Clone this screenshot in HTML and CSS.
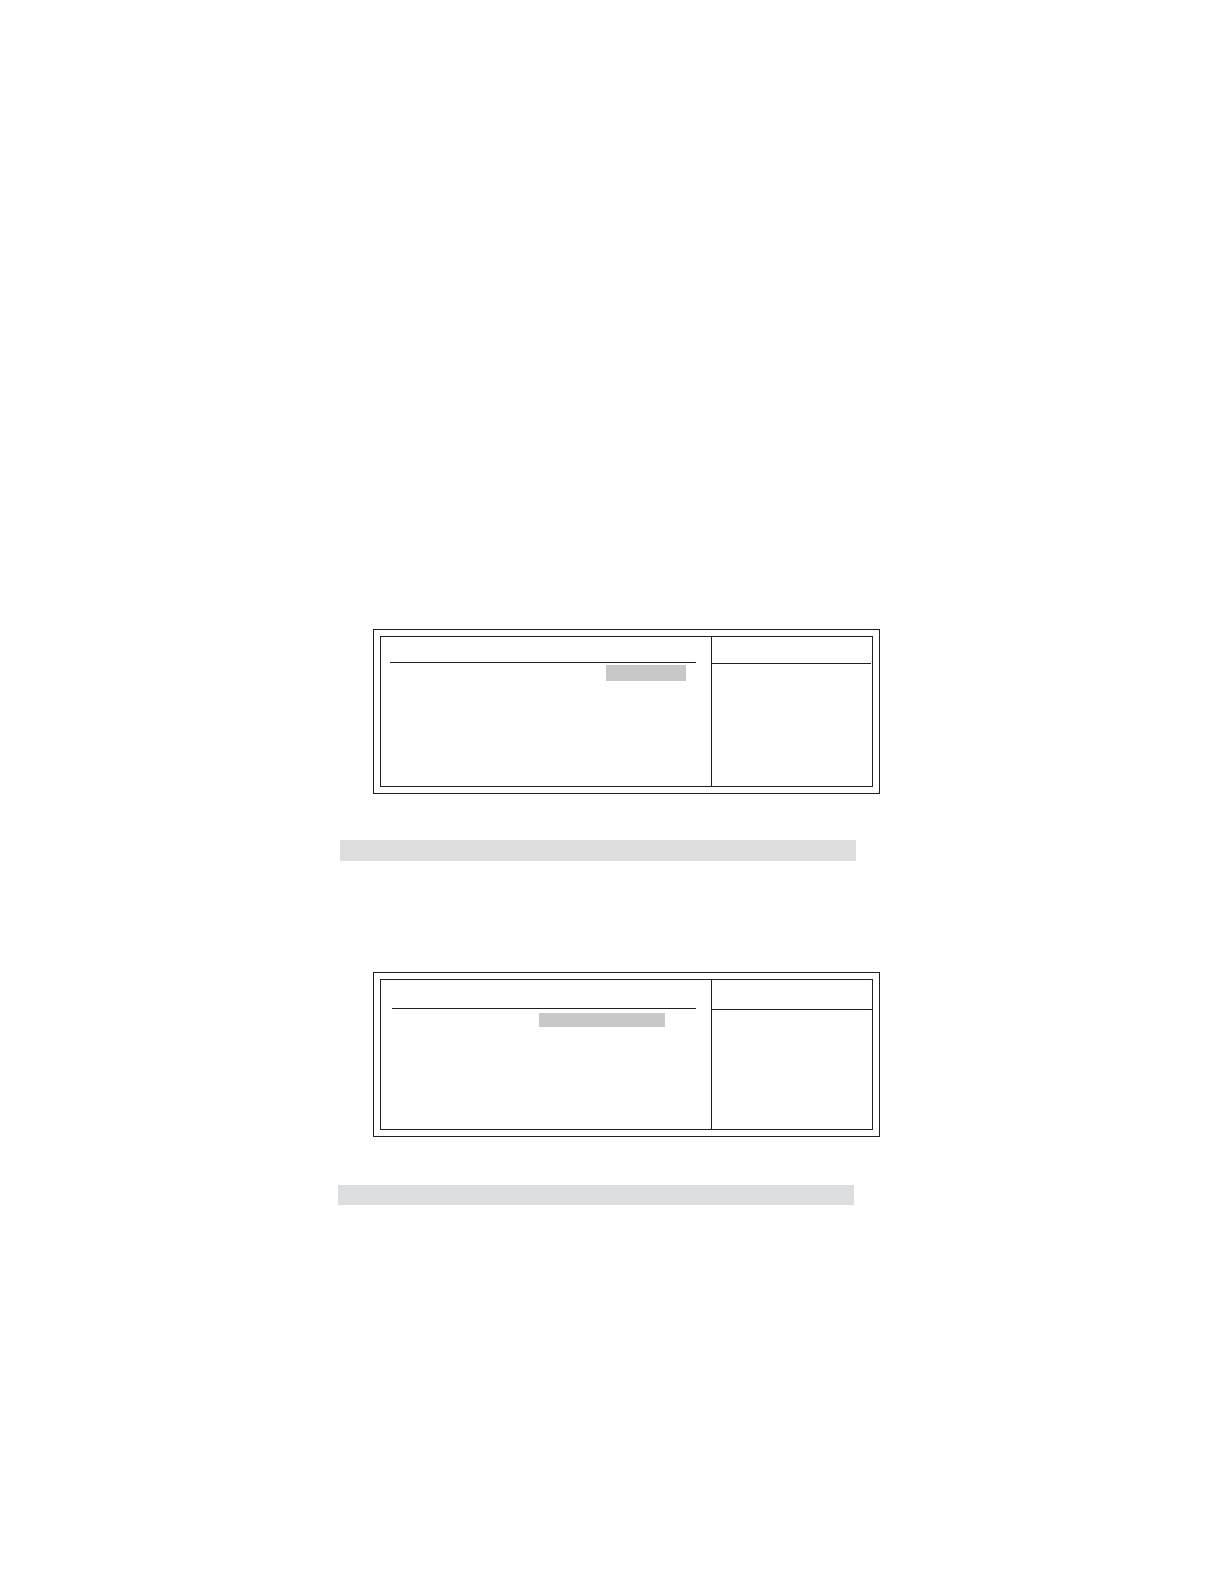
FILE: index.html
```html
<!DOCTYPE html>
<html lang="en">
<head>
  <meta charset="UTF-8" />
  <title>Setup Menus</title>
  <meta name="viewport" content="width=device-width, initial-scale=1" />
  <link rel="stylesheet" href="styles.css">
</head>
<body>

  <main class="page">
    <section class="group">
      <div class="panel">
        <div class="panel-inner">
          <div class="options">
            <div class="options-head"></div>
            <div class="selected"></div>
          </div>
          <div class="help">
            <div class="help-head"></div>
          </div>
        </div>
      </div>
      <div class="bar"></div>
    </section>

    <section class="group group-wide">
      <div class="panel">
        <div class="panel-inner">
          <div class="options">
            <div class="options-head"></div>
            <div class="selected"></div>
          </div>
          <div class="help">
            <div class="help-head"></div>
          </div>
        </div>
      </div>
      <div class="bar"></div>
    </section>
  </main>

</body>
</html>
```

FILE: styles.css
```css
* {
  box-sizing: border-box;
}
body {
  margin: 0;
  background: #fff;
  font-family: "Liberation Sans", Arial, sans-serif;
}
.page {
  display: flex;
  flex-direction: column;
  gap: 111px;
  max-width: 548px;
  margin: 0 auto;
  padding: 629px 0 120px;
}
.group {
  display: flex;
  flex-direction: column;
  gap: 46px;
}

/* double frame */
.panel {
  margin: 0 6px 0 35px;
  padding: 6px;
  border: 1px solid #231f20;
}
.panel-inner {
  display: grid;
  grid-template-columns: 1fr 161px;
  min-height: 151px;
  border: 1px solid #231f20;
}
.options {
  display: flex;
  flex-direction: column;
}
.options-head {
  height: 26px;
  margin: 0 15px 0 9px;
  border-bottom: 1px solid #231f20;
}
.selected {
  align-self: flex-end;
  width: 80px;
  height: 16px;
  margin: 2px 25px 0 0;
  background: #c7c8c8;
}
.help {
  border-left: 1px solid #231f20;
}
.help-head {
  height: 27px;
  margin-right: 1px;
  border-bottom: 1px solid #231f20;
}
.bar {
  height: 21px;
  margin: 0 30px 0 2px;
  background: #dcddde;
}

/* second menu: taller heads, wider selection */
.group-wide {
  gap: 48px;
}
.group-wide .options-head {
  height: 29px;
  margin-left: 11px;
}
.group-wide .selected {
  width: 126px;
  height: 14px;
  margin: 4px 46px 0 0;
}
.group-wide .help-head {
  height: 30px;
  margin-right: 0;
}
.group-wide .bar {
  height: 20px;
  margin: 0 32px 0 0;
}
```
